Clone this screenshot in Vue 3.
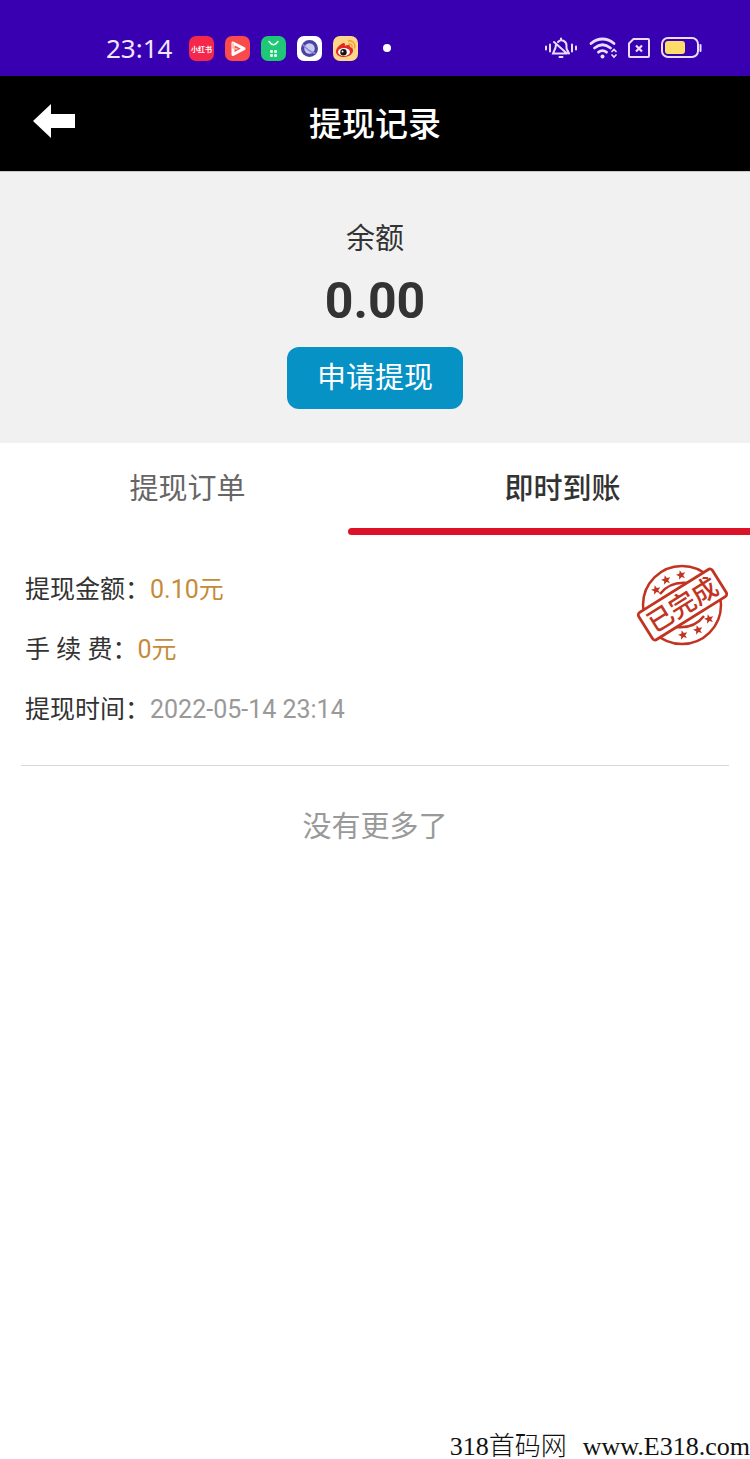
<script setup>
import { ref } from 'vue'

const tabs = ['提现订单', '即时到账']
const active = ref(1)

const records = [
  { amount: '0.10元', fee: '0元', time: '2022-05-14 23:14' },
]

const stars = [[22, 30], [32, 20], [47, 15], [49, 75], [64, 70], [75, 59]]
const starPath = 'M0-5 1.3-1.7 4.8-1.5 2.1.7 3 4 0 2.1-3 4-2.1.7-4.8-1.5-1.3-1.7Z'
</script>

<template>
  <div class="page">
    <div class="status">
      <span class="clock">23:14</span>
      <div class="apps">
        <svg class="app" viewBox="0 0 25 25">
          <rect width="25" height="25" rx="7" fill="#f5274a" />
          <text class="app-name" x="12.5" y="15.5" text-anchor="middle">小红书</text>
        </svg>
        <svg class="app" viewBox="0 0 25 25">
          <rect width="25" height="25" rx="7" fill="#f94a4c" />
          <path d="M8 7v11.500l11-5.800Z" fill="none" stroke="#fff" stroke-width="3" stroke-linejoin="round" />
          <path d="M8 7.500v4.500l4 1" fill="none" stroke="#ffb9a8" stroke-width="1.500" stroke-linecap="round" />
        </svg>
        <svg class="app" viewBox="0 0 25 25">
          <rect width="25" height="25" rx="7" fill="#1fc777" />
          <path d="M8 5.500q4.500 6.500 9 0" fill="none" stroke="#eafff2" stroke-width="1.500" stroke-linecap="round" />
          <g fill="#d6ffe6">
            <rect x="9" y="14" width="3" height="3" rx="1" />
            <rect x="13" y="14" width="3" height="3" rx="1" />
            <rect x="9" y="18" width="3" height="3" rx="1" />
            <rect x="13" y="18" width="3" height="3" rx="1" />
          </g>
        </svg>
        <svg class="app" viewBox="0 0 25 25">
          <rect width="25" height="25" rx="7" fill="#fff" />
          <circle cx="12.500" cy="12.500" r="8.500" fill="#4b43a4" />
          <circle cx="12.500" cy="12.500" r="5.200" fill="#c9cdf3" />
          <path d="M5.500 8q5 7 13 9.500" fill="none" stroke="#8c88d5" stroke-width="1.500" />
        </svg>
        <svg class="app" viewBox="0 0 25 25">
          <rect width="25" height="25" rx="7" fill="#ffd58a" />
          <path d="M3 15.500c0-3 4-7.500 7-8.300 2-.4 2.300.8 1.800 2.500 2.700-1.200 5.700-1.200 5.200 1.300 2.300.6 3.500 2 3 4.300-.8 3.500-4.500 5.700-9 5.700S3 19 3 15.500Z" fill="#e32a22" />
          <ellipse cx="11" cy="16" rx="6" ry="4" fill="#fff" />
          <circle cx="10.500" cy="16.200" r="3.200" fill="#17110f" />
          <circle cx="9.500" cy="15.500" r="1" fill="#fff" />
          <path d="M15.500 5c4-1 7.500 3 6 7M16 8c2-.4 3.500 1.300 3 3" fill="none" stroke="#f49b35" stroke-width="1.400" stroke-linecap="round" />
        </svg>
      </div>
      <span class="dot"></span>
      <div class="system">
        <svg width="34" height="24" viewBox="0 0 34 24" fill="none" stroke="#e9ddff" stroke-width="2" stroke-linecap="round">
          <path d="M2 10.500v3M6 8.500v7M28 8.500v7M32 10.500v3" />
          <path d="M12 8.500c0 4-2 6-3 9h14M14 6c3-3.300 8.500-1.300 8.500 3.500v3l2.500 5M17 2.500v1M15.500 21h3M10 6l13 11.500" />
        </svg>
        <svg width="28" height="24" viewBox="0 0 28 24" fill="none" stroke="#e9ddff" stroke-width="2.800" stroke-linecap="round">
          <path d="M2 7.500c7-6 16-6 23 0M5.500 12c5-4 11-4 16 0M9.500 16.200c2.500-2 5.500-2 8 0" />
          <circle cx="13.500" cy="20.500" r="2" fill="#e9ddff" stroke="none" />
          <path d="m23 15.500 2-2 2 2M23 19l2 2 2-2" stroke-width="1.700" />
        </svg>
        <svg width="22" height="24" viewBox="0 0 22 24" fill="none" stroke="#e9ddff" stroke-width="2">
          <path d="M5.500 3H20a1 1 0 0 1 1 1v16a1 1 0 0 1-1 1H2a1 1 0 0 1-1-1V7.500Z" />
          <path d="m8 9.500 6 6m0-6-6 6" stroke-width="2.200" />
        </svg>
        <svg width="41" height="24" viewBox="0 0 41 24">
          <rect x="1" y="2" width="36" height="19" rx="6" fill="none" stroke="#e9ddff" stroke-width="2" />
          <rect x="4" y="5" width="20" height="13" rx="3" fill="#ffdc6a" />
          <path d="M39.500 9v6" stroke="#e9ddff" stroke-width="2" stroke-linecap="round" />
        </svg>
      </div>
    </div>

    <header class="header">
      <button class="back" type="button" aria-label="返回">
        <svg width="42" height="34" viewBox="0 0 42 34"><path d="M0 17 18 0v10h24v14H18v10Z" fill="#fff" /></svg>
      </button>
      <h1 class="title">提现记录</h1>
    </header>

    <section class="balance">
      <div class="balance-label">余额</div>
      <div class="balance-value">0.00</div>
      <button class="apply" type="button">申请提现</button>
    </section>

    <nav class="tabs">
      <button
        v-for="(tab, i) in tabs"
        :key="tab"
        type="button"
        class="tab"
        :class="{ active: i === active }"
        @click="active = i"
      >{{ tab }}</button>
    </nav>
    <div class="indicator" :class="{ first: active === 0 }"></div>

    <main class="list">
      <article v-for="r in records" :key="r.time" class="record">
        <div class="lines">
          <div class="line">提现金额：<span class="money">{{ r.amount }}</span></div>
          <div class="line">手 续 费：<span class="money">{{ r.fee }}</span></div>
          <div class="line">提现时间：<span class="time">{{ r.time }}</span></div>
        </div>
        <svg class="stamp" viewBox="0 0 98 90" fill="none" stroke="#c23322">
          <circle cx="48" cy="45" r="39" stroke-width="2.500" />
          <path d="M26 34Q36 21 54 23M70 56Q60 69 42 67" stroke-width="2.500" />
          <path
            v-for="s in stars"
            :key="s.join()"
            :d="starPath"
            :transform="`translate(${s[0]} ${s[1]}) rotate(-15)`"
            fill="#c23322"
            stroke="none"
          />
          <g transform="rotate(-32 48.500 44.500)">
            <rect x="5" y="28.500" width="87" height="32" rx="3" fill="#fff" stroke-width="2.800" />
            <text class="stamp-text" x="48.500" y="54" text-anchor="middle">已完成</text>
          </g>
        </svg>
      </article>
      <p class="end">没有更多了</p>
    </main>

    <footer class="mark"><span>318首码网</span><span>www.E318.com</span></footer>
  </div>
</template>

<style>
body {
  background: #fff;
}
</style>

<style scoped>
.page {
  display: flex;
  flex-direction: column;
  min-height: 100vh;
  background: #fff;
  color: #333;
  font-family: Roboto, "Noto Sans CJK SC", sans-serif;
}
button {
  padding: 0;
  border: 0;
  background: none;
  color: inherit;
  font-family: inherit;
  cursor: pointer;
}
svg {
  display: block;
}
.status {
  display: flex;
  align-items: center;
  box-sizing: border-box;
  height: 76px;
  padding: 20px 48px 0 106px;
  background: #3900b1;
}
.clock {
  color: #efe6ff;
  font: 26px/36px "Noto Sans", sans-serif;
}
.apps {
  display: flex;
  gap: 11px;
  margin-left: 17px;
}
.app {
  width: 25px;
  height: 25px;
}
.app-name {
  fill: #fff;
  font-size: 7px;
  font-weight: 700;
}
.dot {
  width: 8px;
  height: 8px;
  margin-left: 25px;
  border-radius: 50%;
  background: #fff;
}
.system {
  display: flex;
  align-items: center;
  gap: 11px;
  margin-left: auto;
}
.header {
  display: grid;
  grid-template-columns: 75px 1fr 75px;
  align-items: center;
  height: 95px;
  border-bottom: 1px solid #c8c8c8;
  background: #000;
  color: #fff;
}
.back {
  justify-self: end;
  padding-bottom: 5px;
}
.title {
  margin: 0;
  padding-top: 3px;
  font-size: 33px;
  font-weight: 500;
  line-height: 48px;
  text-align: center;
}
.balance {
  display: flex;
  flex-direction: column;
  align-items: center;
  padding: 45px 0 34px;
  background: #f1f1f1;
}
.balance-label {
  font-size: 29px;
  line-height: 44px;
}
.balance-value {
  margin: 5px 0 11px;
  font-size: 50px;
  font-weight: 700;
  line-height: 70px;
}
.apply {
  height: 62px;
  padding: 0 30px;
  border-radius: 12px;
  background: #0792c5;
  color: #fff;
  font-size: 29px;
  line-height: 62px;
}
.tabs {
  display: grid;
  grid-template-columns: 1fr 1fr;
}
.tab {
  height: 85px;
  color: #666;
  font-size: 29px;
}
.tab.active {
  color: #333;
  font-weight: 500;
}
.indicator {
  height: 7px;
  margin-left: calc(50% - 27px);
  border-radius: 4px 0 0 4px;
  background: #dc1229;
}
.indicator.first {
  margin-right: calc(50% - 27px);
  margin-left: 0;
  border-radius: 0 4px 4px 0;
}
.list {
  padding: 0 21px;
}
.record {
  display: flex;
  justify-content: space-between;
  padding: 25px 0 25px 4px;
  border-bottom: 1px solid #d9d9d9;
}
.line {
  font-size: 25px;
  line-height: 60px;
}
.money {
  color: #c58b3a;
}
.time {
  color: #999;
}
.stamp {
  width: 98px;
  height: 90px;
  margin-right: -3px;
}
.stamp-text {
  fill: #c23322;
  stroke: none;
  font-size: 26px;
  font-weight: 500;
}
.end {
  margin: 39px 0;
  color: #999;
  font-size: 29px;
  line-height: 44px;
  text-align: center;
}
.mark {
  display: flex;
  justify-content: flex-end;
  gap: 16px;
  margin-top: auto;
  color: #111;
  font-family: "Liberation Serif", "Noto Sans CJK SC", serif;
  font-size: 26px;
  font-weight: 300;
  line-height: 24px;
}
</style>
